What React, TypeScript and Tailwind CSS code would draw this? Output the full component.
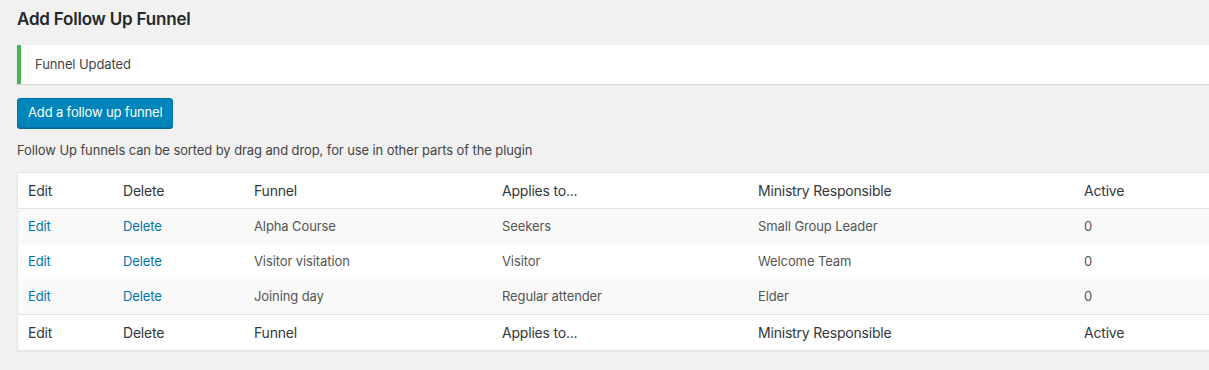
const font = { fontFamily: 'Inter, "Liberation Sans", sans-serif' };

type Row = { funnel: string; applies: string; ministry: string; active: string };

const rows: Row[] = [
    { funnel: 'Alpha Course', applies: 'Seekers', ministry: 'Small Group Leader', active: '0' },
    { funnel: 'Visitor visitation', applies: 'Visitor', ministry: 'Welcome Team', active: '0' },
    { funnel: 'Joining day', applies: 'Regular attender', ministry: 'Elder', active: '0' },
];

const cols = 'grid grid-cols-[95px_131px_248px_256px_326px_1fr]';

function HeadRow({ border }: { border: 'top' | 'bottom' }) {
    return (
        <div
            className={`${cols} h-[36px] items-center text-[14px] tracking-[-0.2px] text-[#32373c] bg-white ${
                border === 'bottom' ? 'border-b border-[#e1e1e1]' : 'border-t border-[#e1e1e1]'
            }`}
        >
            <div className="pl-[10px]">Edit</div>
            <div className="pl-[10px]">Delete</div>
            <div className="pl-[10px]">Funnel</div>
            <div className="pl-[10px]">Applies to...</div>
            <div className="pl-[10px]">Ministry Responsible</div>
            <div className="pl-[10px]">Active</div>
        </div>
    );
}

export default function App() {
    return (
        <div className="w-[1209px] h-[370px] overflow-hidden bg-[#f1f1f1]" style={font}>
            <div className="w-[1240px] pl-[17px] pt-[9px]">
                {/* title */}
                <h1 className="text-[17px] font-semibold tracking-[-0.2px] text-[#23282d] leading-[20px]">Add Follow Up Funnel</h1>

                {/* notice */}
                <div className="mt-[16px] h-[39px] flex items-center bg-white border-l-4 border-[#46b450] shadow-[0_1px_1px_rgba(0,0,0,0.1)] pl-[14px] text-[13px] tracking-[-0.1px] text-[#444]">
                    Funnel Updated
                </div>

                {/* button */}
                <button className="mt-[14px] h-[30px] px-[10px] rounded-[3px] bg-[#0085ba] border border-[#0073aa] shadow-[0_1px_0_#006799] text-white text-[13px] tracking-[-0.15px]">
                    Add a follow up funnel
                </button>

                <p className="mt-[13px] text-[13px] tracking-[-0.1px] text-[#444] leading-[18px]">
                    Follow Up funnels can be sorted by drag and drop, for use in other parts of the plugin
                </p>

                {/* table */}
                <div className="mt-[13px] bg-white border border-[#e5e5e5] shadow-[0_1px_1px_rgba(0,0,0,0.04)]">
                    <HeadRow border="bottom" />
                    {rows.map((r, i) => (
                        <div
                            key={i}
                            className={`${cols} h-[35px] items-center text-[13px] tracking-[-0.1px] text-[#555] ${i % 2 === 0 ? 'bg-[#f9f9f9]' : 'bg-white'}`}
                        >
                            <div className="pl-[10px] text-[#0073aa]">Edit</div>
                            <div className="pl-[10px] text-[#0073aa]">Delete</div>
                            <div className="pl-[10px]">{r.funnel}</div>
                            <div className="pl-[10px]">{r.applies}</div>
                            <div className="pl-[10px]">{r.ministry}</div>
                            <div className="pl-[10px]">{r.active}</div>
                        </div>
                    ))}
                    <HeadRow border="top" />
                </div>
            </div>
        </div>
    );
}
